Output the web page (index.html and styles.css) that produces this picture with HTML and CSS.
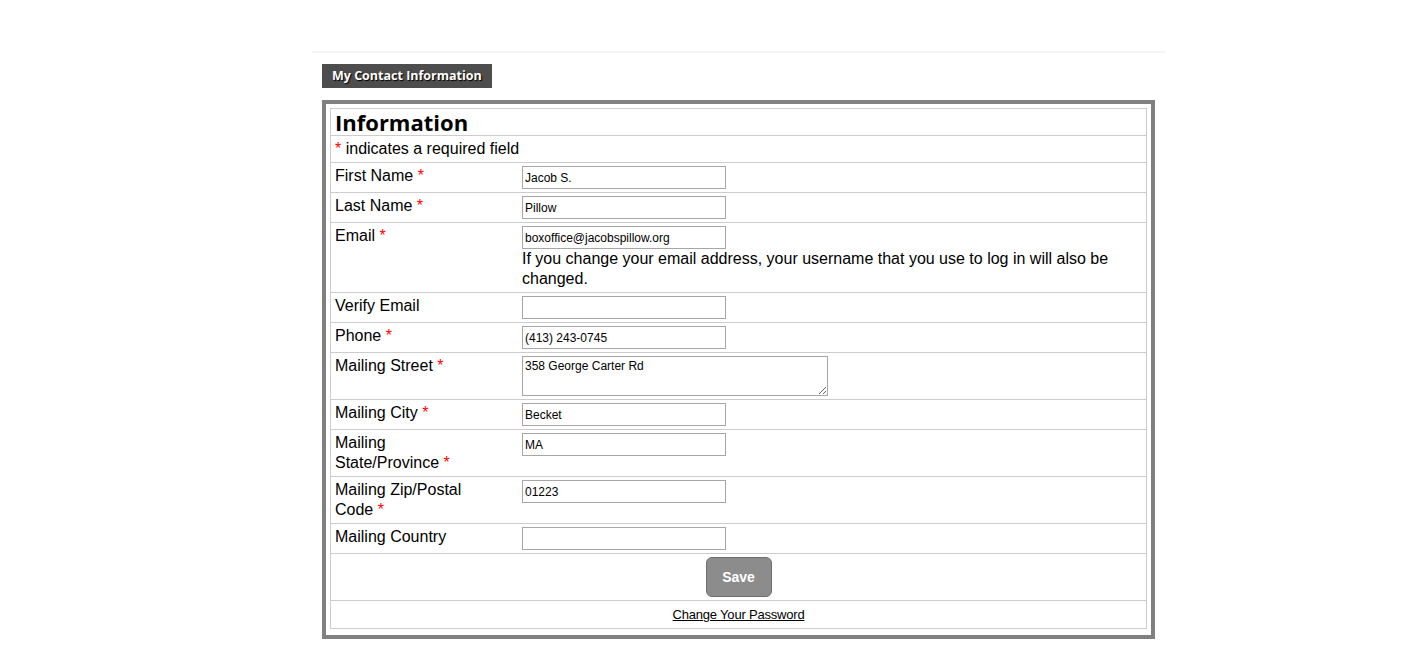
FILE: index.html
```html
<!DOCTYPE html>
<html>
<head>
<meta charset="utf-8">
<link rel="stylesheet" href="styles.css">
</head>
<body>
<div class="page">
  <div class="topline"></div>
  <div class="content">
    <div class="tab">My Contact Information</div>
    <div class="box">
      <table class="form">
        <tr><td colspan="2" class="heading">Information</td></tr>
        <tr><td colspan="2" class="note"><span class="req">*</span> indicates a required field</td></tr>
        <tr><td class="label">First Name <span class="req">*</span></td><td class="field"><input class="text" type="text" value="Jacob S."></td></tr>
        <tr><td class="label">Last Name <span class="req">*</span></td><td class="field"><input class="text" type="text" value="Pillow"></td></tr>
        <tr><td class="label">Email <span class="req">*</span></td><td class="field"><input class="text" type="text" value="boxoffice@jacobspillow.org"><div class="hint">If you change your email address, your username that you use to log in will also be changed.</div></td></tr>
        <tr><td class="label">Verify Email</td><td class="field"><input class="text" type="text" value=""></td></tr>
        <tr><td class="label">Phone <span class="req">*</span></td><td class="field"><input class="text" type="text" value="(413) 243-0745"></td></tr>
        <tr><td class="label">Mailing Street <span class="req">*</span></td><td class="field"><textarea class="area">358 George Carter Rd</textarea></td></tr>
        <tr><td class="label">Mailing City <span class="req">*</span></td><td class="field"><input class="text" type="text" value="Becket"></td></tr>
        <tr><td class="label">Mailing State/Province <span class="req">*</span></td><td class="field"><input class="text" type="text" value="MA"></td></tr>
        <tr><td class="label">Mailing Zip/Postal Code <span class="req">*</span></td><td class="field"><input class="text" type="text" value="01223"></td></tr>
        <tr><td class="label">Mailing Country</td><td class="field"><input class="text" type="text" value=""></td></tr>
        <tr><td colspan="2" class="center"><button class="save" type="button">Save</button></td></tr>
        <tr><td colspan="2" class="center"><a class="pw" href="#">Change Your Password</a></td></tr>
      </table>
    </div>
  </div>
</div>
</body>
</html>
```

FILE: styles.css
```css
html, body {
  margin: 0;
  padding: 0;
  background: #ffffff;
}

body {
  font-family: "Liberation Sans", Arial, sans-serif;
  color: #000;
}

.page {
  margin-left: 312px;
  width: 854px;
  padding-top: 51px;
}

.topline {
  height: 2px;
  background: #f5f5f5;
}

.content {
  padding: 11px 10px 0 10px;
}

.tab {
  display: inline-block;
  height: 24px;
  line-height: 24px;
  padding: 0 10px;
  background: #4d4d4d;
  color: #fff;
  font-family: "Open Sans", sans-serif;
  font-weight: 700;
  font-size: 12.5px;
  letter-spacing: 0;
  text-shadow: 1px 1px 1px #000;
  vertical-align: top;
}

.box {
  margin-top: 12px;
  width: 833px;
  box-sizing: border-box;
  border: 4px solid #808080;
  padding: 4px 4px 6px 4px;
}

.form {
  width: 100%;
  border-collapse: collapse;
  border: 1px solid #cccccc;
}

.form td {
  border-bottom: 1px solid #cccccc;
  padding: 3px 4px;
  vertical-align: top;
  font-size: 16px;
  line-height: 20px;
}

.form td.heading {
  font-family: "Open Sans", sans-serif;
  font-weight: 700;
  font-size: 22px;
  line-height: 20px;
}

.form td.label {
  width: 140px;
  padding-right: 43px;
}

.req {
  color: #ff0000;
}

.text {
  display: block;
  box-sizing: border-box;
  width: 204px;
  height: 23px;
  margin: 0;
  padding: 0 2px;
  border: 1px solid #a6a6a6;
  font-family: "Liberation Sans", Arial, sans-serif;
  font-size: 12px;
  color: #000;
  background: #fff;
}

.area {
  display: block;
  box-sizing: border-box;
  width: 306px;
  height: 40px;
  margin: 0;
  padding: 2px;
  border: 1px solid #a6a6a6;
  font-family: "Liberation Sans", Arial, sans-serif;
  font-size: 12px;
  color: #000;
}

.hint {
  font-size: 16px;
  line-height: 20px;
}

.form td.center {
  text-align: center;
}

.save {
  width: 66px;
  height: 40px;
  margin: 0;
  padding: 0;
  background: #8c8c8c;
  border: 1px solid #6e6e6e;
  border-radius: 6px;
  color: #fff;
  font-family: "Liberation Sans", Arial, sans-serif;
  font-weight: 700;
  font-size: 14px;
  vertical-align: top;
}

.pw {
  color: #000;
  font-size: 13px;
  letter-spacing: -0.2px;
  text-decoration: underline;
}
```
